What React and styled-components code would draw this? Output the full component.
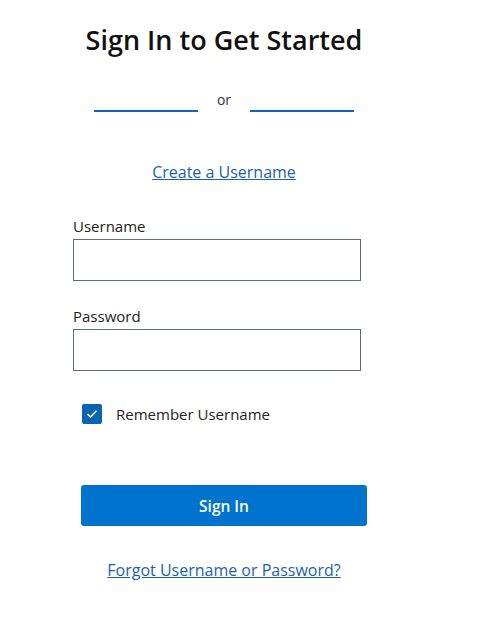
import React from "react";
import styled, { createGlobalStyle } from "styled-components";

const GlobalStyle = createGlobalStyle`
  body {
    margin: 0;
    background: #ffffff;
    font-family: "Open Sans", "Noto Sans", sans-serif;
    color: #1a1a1a;
  }
`;

const Page = styled.main`
  width: 480px;
  min-height: 618px;
  padding: 24px 0 0 73px;
  box-sizing: border-box;
`;

const Column = styled.div`
  width: 302px;
  display: flex;
  flex-direction: column;
`;

const Title = styled.h1`
  margin: 0;
  font-size: 27px;
  font-weight: 600;
  text-align: center;
  color: #111;
  line-height: 32px;
`;

const Divider = styled.div`
  display: flex;
  align-items: center;
  justify-content: center;
  gap: 18px;
  margin-top: 34px;
  height: 20px;
`;

const Rule = styled.span`
  display: block;
  width: 104px;
  height: 1.5px;
  background: #0a66c2;
  margin-top: 22px;
`;

const OrText = styled.span`
  font-size: 14px;
  line-height: 20px;
  color: #333;
  width: 16px;
  text-align: center;
`;

const CenterLink = styled.a`
  align-self: center;
  font-size: 16px;
  line-height: 20px;
  color: #1c5fb0;
  text-decoration: underline;
  cursor: pointer;
  margin-top: ${(p) => p.$top}px;
`;

const Field = styled.label`
  display: flex;
  flex-direction: column;
  margin-top: ${(p) => p.$top}px;
  font-size: 15px;
  color: #222;
`;

const LabelText = styled.span`
  line-height: 18px;
  margin-bottom: 4px;
`;

const Input = styled.input`
  width: 288px;
  height: 42px;
  box-sizing: border-box;
  border: 1px solid #5f6b85;
  border-radius: 0;
  padding: 0 10px;
  font: inherit;
  outline: none;
`;

const CheckRow = styled.label`
  display: flex;
  align-items: center;
  gap: 14px;
  margin: 33px 0 0 9px;
  font-size: 15px;
  color: #222;
`;

const Box = styled.span`
  width: 20px;
  height: 20px;
  border-radius: 2px;
  background: #0a62b3;
  display: flex;
  align-items: center;
  justify-content: center;
`;

const Button = styled.button`
  margin: 61px 0 0 8px;
  width: 286px;
  height: 41px;
  border: none;
  border-radius: 3px;
  background: #0073cf;
  color: #fff;
  font-family: inherit;
  font-size: 15.5px;
  font-weight: 600;
`;

export default function App() {
  return (
    <Page>
      <GlobalStyle />
      <Column>
        <Title>Sign In to Get Started</Title>
        <Divider>
          <Rule />
          <OrText>or</OrText>
          <Rule />
        </Divider>
        <CenterLink $top={52}>Create a Username</CenterLink>
        <Field $top={35}>
          <LabelText>Username</LabelText>
          <Input type="text" />
        </Field>
        <Field $top={26}>
          <LabelText>Password</LabelText>
          <Input type="password" />
        </Field>
        <CheckRow>
          <Box>
            <svg width="12" height="10" viewBox="0 0 12 10">
              <path d="M1.5 5.2 L4.5 8 L10.5 1.8" fill="none" stroke="#fff" strokeWidth="1.6" />
            </svg>
          </Box>
          Remember Username
        </CheckRow>
        <Button type="button">Sign In</Button>
        <CenterLink $top={34}>Forgot Username or Password?</CenterLink>
      </Column>
    </Page>
  );
}
